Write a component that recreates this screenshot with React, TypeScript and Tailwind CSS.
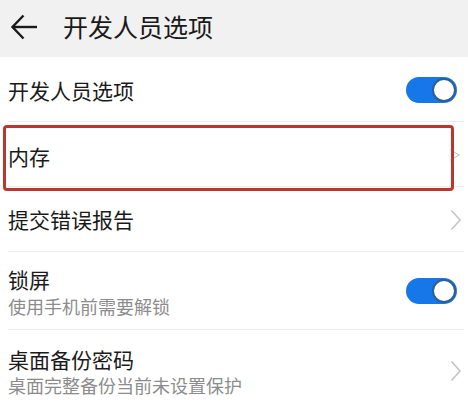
import React from "react";

const font = { fontFamily: '"Noto Sans CJK SC", "Noto Sans", sans-serif' };

function Toggle() {
  return (
    <div className="relative w-[51px] h-[26px] rounded-full bg-[#1677e8]">
      <div className="absolute right-[1px] top-[1px] w-[24px] h-[24px] rounded-full bg-white border-[2px] border-[#2d5f94]" />
    </div>
  );
}

function Chevron() {
  return (
    <svg width="12" height="22" viewBox="0 0 12 22" className="block">
      <path d="M1.5 1.5 L10 11 L1.5 20.5" fill="none" stroke="#c4c4c4" strokeWidth="1.6" />
    </svg>
  );
}

function Divider() {
  return <div className="h-px bg-[#ececec] ml-2 mr-[4px]" />;
}

export default function App() {
  return (
    <div className="w-[468px] h-[406px] overflow-hidden bg-white text-[#1a1a1a]" style={font}>
      {/* Header */}
      <div className="h-[57px] bg-[#f1f1f1] flex items-center">
        <svg width="30" height="30" viewBox="0 0 30 30" className="ml-[10px] mt-[-4px]">
          <path d="M2.5 15 H27" stroke="#1a1a1a" strokeWidth="2.4" fill="none" />
          <path d="M13.5 3.5 L2.5 15 L13.5 26.5" stroke="#1a1a1a" strokeWidth="2.4" fill="none" />
        </svg>
        <div className="ml-[23px] mt-[-4px] text-[25px] leading-none">开发人员选项</div>
      </div>

      {/* Row 1 */}
      <div className="h-[64px] flex items-center justify-between pl-2 pr-[11px]">
        <div className="text-[21px] leading-none mt-[2px]">开发人员选项</div>
        <div className="mt-[2px]"><Toggle /></div>
      </div>
      <Divider />

      {/* Row 2 - 内存 */}
      <div className="relative h-[64px] flex items-center justify-between pl-2 pr-[7px]">
        <div className="text-[21px] leading-none mt-[4px]">内存</div>
        <div className="mt-[2px] scale-y-[0.55] origin-center"><Chevron /></div>
        <div className="absolute left-[3px] top-[3px] w-[451px] h-[66px] border-[3px] border-[#b9372f] rounded-[4px]" />
      </div>
      <Divider />

      {/* Row 3 */}
      <div className="h-[64px] flex items-center justify-between pl-2 pr-[6px]">
        <div className="text-[21px] leading-none">提交错误报告</div>
        <div className="mt-[2px]"><Chevron /></div>
      </div>
      <Divider />

      {/* Row 4 */}
      <div className="h-[77px] flex items-center justify-between pl-2 pr-[11px]">
        <div className="flex flex-col">
          <div className="text-[21px] leading-none mt-[2px]">锁屏</div>
          <div className="text-[18px] leading-none text-[#8c8c8c] mt-[7px]">使用手机前需要解锁</div>
        </div>
        <div className="mt-[0px]"><Toggle /></div>
      </div>
      <Divider />

      {/* Row 5 */}
      <div className="h-[77px] flex items-center justify-between pl-2 pr-[6px]">
        <div className="flex flex-col">
          <div className="text-[21px] leading-none mt-[6px]">桌面备份密码</div>
          <div className="text-[18px] leading-none text-[#8c8c8c] mt-[6px] whitespace-nowrap">桌面完整备份当前未设置保护</div>
        </div>
        <div className="mt-[5px]"><Chevron /></div>
      </div>
    </div>
  );
}
